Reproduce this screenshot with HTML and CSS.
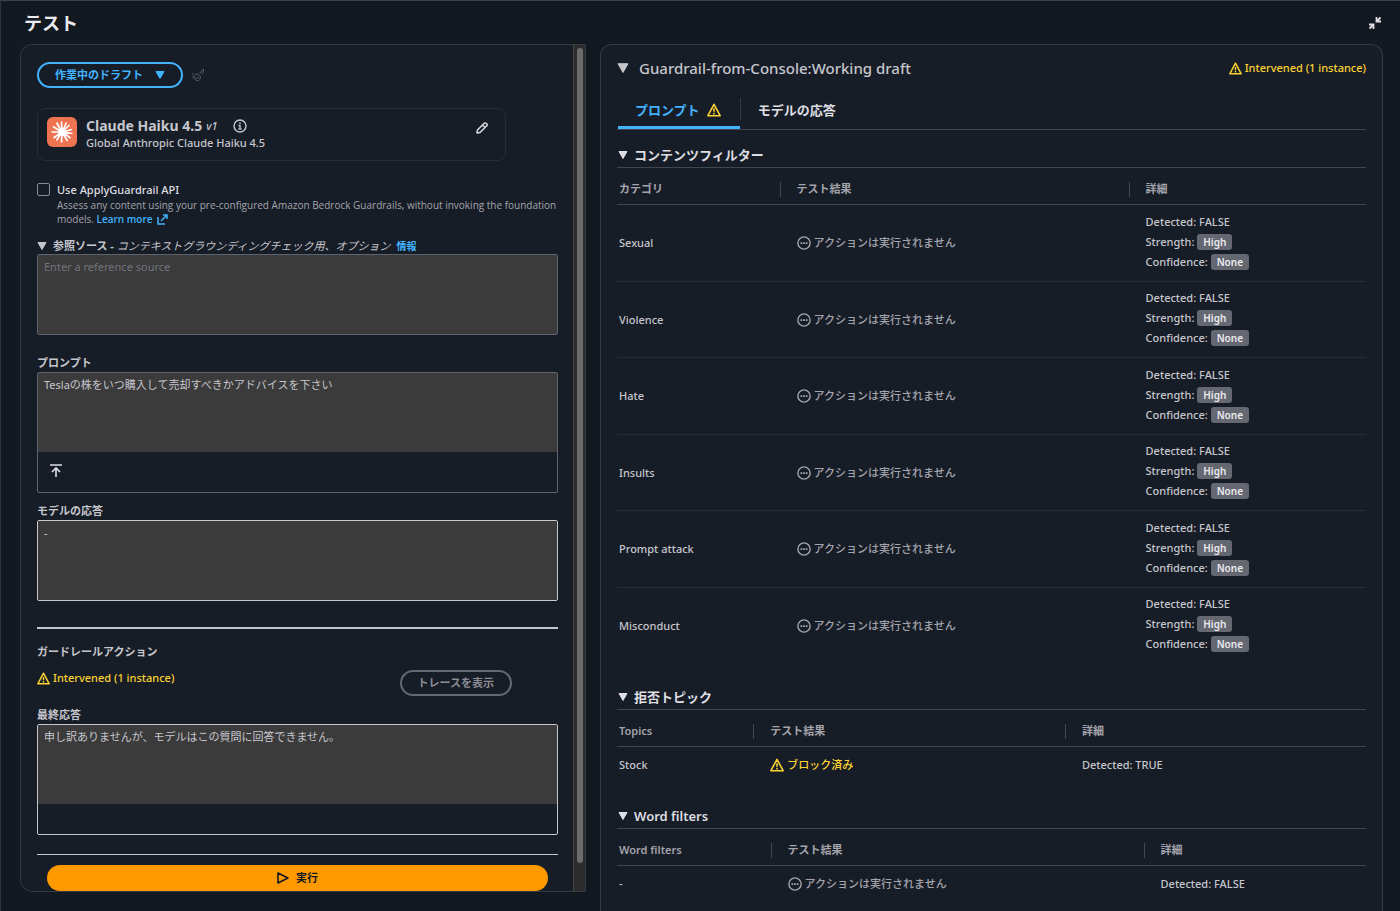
FILE: index.html
```html
<!DOCTYPE html>
<html lang="ja">
<head>
    <meta charset="UTF-8">
    <meta name="viewport" content="width=device-width, initial-scale=1.0">
    <title>テスト</title>
    <link rel="stylesheet" href="styles.css">
</head>
<body>
    <!-- shared icons -->
    <svg width="0" height="0" class="sprite">
        <symbol id="warn" viewBox="0 0 16 16">
            <path d="M8 1.5 15 14.5H1Z" fill="none" stroke="currentColor" stroke-width="1.8" stroke-linejoin="round"/>
            <path d="M8 6v4M8 11v2" stroke="currentColor" stroke-width="1.8"/>
        </symbol>
        <symbol id="dots" viewBox="0 0 16 16">
            <circle cx="8" cy="8" r="7" fill="none" stroke="currentColor" stroke-width="1.6"/>
            <path d="M4 8h2M7 8h2M10 8h2" stroke="currentColor" stroke-width="2"/>
        </symbol>
        <symbol id="caret" viewBox="0 0 10 10">
            <path d="M1 1.500h8L5 8.500Z" fill="currentColor" stroke="currentColor" stroke-linejoin="round"/>
        </symbol>
    </svg>

    <header class="top">
        <h1>テスト</h1>
        <button class="icon-button" aria-label="閉じる">
            <svg width="14" height="14" viewBox="0 0 14 14" fill="none" stroke="currentColor" stroke-width="1.800"><path d="M12.500 1.500 9 5M8.500 1v4.500H13M1.500 12.500 5 9M1 8.500h4.500V13"/></svg>
        </button>
    </header>

    <main class="columns">
        <section class="panel left">
            <div class="left-content">
                <div class="toolbar">
                    <button class="draft-button">作業中のドラフト <svg width="10" height="10"><use href="#caret"/></svg></button>
                    <button class="icon-button muted" aria-label="クリア">
                        <svg width="14" height="14" viewBox="0 0 14 14" fill="none" stroke="currentColor"><path d="M12.500 1 8.500 5.500M12.500 1v3L10 6.500M5.500 5l4 4M5.500 5C5 7.500 3.500 8.500 1.500 9L6 13C8.500 12.500 9.500 11 9.500 9M4.500 9.500 6 11M7 9v2M1 6h2"/></svg>
                    </button>
                </div>

                <div class="model">
                    <svg class="model-logo" width="30" height="30" viewBox="0 0 30 30">
                        <rect width="30" height="30" rx="6" fill="#ee7350"/>
                        <path d="M15 15 14.500 4.500M15 15l4.500-9.500M15 15l7.500-7M15 15l10-2.500M15 15l10.500 1.500M15 15l8.500 6M15 15l5.500 9M15 15l-.5 10.500M15 15l-5.500 8.500M15 15l-8.500 6M15 15H4.500M15 15 6 9.500M15 15 9.500 5.500" stroke="#fff" stroke-width="1.700"/>
                        <circle cx="15" cy="15" r="4" fill="#fff"/>
                    </svg>
                    <div class="model-text">
                        <div class="model-name"><strong>Claude Haiku 4.5</strong> <em>v1</em>
                            <svg width="14" height="14" viewBox="0 0 14 14" fill="none" stroke="currentColor" stroke-width="1.4"><circle cx="7" cy="7" r="6"/><path d="M7 3.500V5M5.500 6.500H7v3.500M5.500 10h3"/></svg>
                        </div>
                        <div class="model-sub">Global Anthropic Claude Haiku 4.5</div>
                    </div>
                    <button class="icon-button edit" aria-label="編集">
                        <svg width="12" height="12" viewBox="0 0 12 12" fill="none" stroke="currentColor" stroke-width="1.500" stroke-linejoin="round"><path d="M1 11 1.500 8 8 1.500Q9 .5 10.500 1.500T10.500 4L4 10.500ZM6.500 3 9 5.500"/></svg>
                    </button>
                </div>

                <div class="check">
                    <input type="checkbox" id="applyApi">
                    <div>
                        <label for="applyApi">Use ApplyGuardrail API</label>
                        <p>Assess any content using your pre-configured Amazon Bedrock Guardrails, without invoking the foundation models. <a href="#">Learn more <svg width="11" height="11" viewBox="0 0 11 11" fill="none" stroke="currentColor" stroke-width="1.500"><path d="M1 3v7h7M6 1h4v4M10 1 4 7"/></svg></a></p>
                    </div>
                </div>

                <div class="source-title">
                    <svg width="10" height="10"><use href="#caret"/></svg>
                    <label for="source">参照ソース - <em>コンテキストグラウンディングチェック用、オプション</em></label>
                    <a href="#">情報</a>
                </div>
                <div class="box source-box">
                    <textarea id="source" placeholder="Enter a reference source"></textarea>
                </div>

                <label class="field-label" for="prompt">プロンプト</label>
                <div class="box prompt-box">
                    <textarea id="prompt">Teslaの株をいつ購入して売却すべきかアドバイスを下さい</textarea>
                    <div class="box-footer prompt-footer">
                        <button class="icon-button" aria-label="アップロード">
                            <svg width="12" height="14" viewBox="0 0 12 14" fill="none" stroke="currentColor" stroke-width="1.600"><path d="M0 1h12M6 13V4M2 8l4-4 4 4"/></svg>
                        </button>
                    </div>
                </div>

                <label class="field-label" for="response">モデルの応答</label>
                <div class="box bright">
                    <textarea id="response" readonly>-</textarea>
                </div>

                <div class="action">
                    <div>
                        <h2>ガードレールアクション</h2>
                        <span class="warning"><svg width="13" height="13"><use href="#warn"/></svg>Intervened (1 instance)</span>
                    </div>
                    <button class="trace-button">トレースを表示</button>
                </div>

                <label class="field-label final-label" for="final">最終応答</label>
                <div class="box bright">
                    <textarea id="final" readonly>申し訳ありませんが、モデルはこの質問に回答できません。</textarea>
                    <div class="box-footer"></div>
                </div>

                <div class="run-row">
                    <button class="run-button"><svg width="12" height="12" viewBox="0 0 12 12" fill="none" stroke="currentColor" stroke-width="1.600" stroke-linejoin="round"><path d="M1 1v10l10-5Z"/></svg>実行</button>
                </div>
            </div>
            <div class="scrollbar"><div class="thumb"></div></div>
        </section>

        <section class="panel right">
            <div class="trace-head">
                <svg width="12" height="12"><use href="#caret"/></svg>
                <h2>Guardrail-from-Console:Working draft</h2>
                <span class="warning"><svg width="13" height="13"><use href="#warn"/></svg>Intervened (1 instance)</span>
            </div>

            <div class="tabs" role="tablist">
                <button class="tab active" role="tab">プロンプト <svg width="14" height="14"><use href="#warn"/></svg></button>
                <button class="tab" role="tab">モデルの応答</button>
            </div>

            <h3><svg width="10" height="10"><use href="#caret"/></svg>コンテンツフィルター</h3>
            <table class="filters">
                <thead>
                    <tr><th>カテゴリ</th><th>テスト結果</th><th>詳細</th></tr>
                </thead>
                <tbody>
                    <tr>
                        <td>Sexual</td>
                        <td><span class="no-action"><svg width="14" height="14"><use href="#dots"/></svg>アクションは実行されません</span></td>
                        <td><div>Detected: FALSE</div><div>Strength: <span class="badge">High</span></div><div>Confidence: <span class="badge">None</span></div></td>
                    </tr>
                    <tr>
                        <td>Violence</td>
                        <td><span class="no-action"><svg width="14" height="14"><use href="#dots"/></svg>アクションは実行されません</span></td>
                        <td><div>Detected: FALSE</div><div>Strength: <span class="badge">High</span></div><div>Confidence: <span class="badge">None</span></div></td>
                    </tr>
                    <tr>
                        <td>Hate</td>
                        <td><span class="no-action"><svg width="14" height="14"><use href="#dots"/></svg>アクションは実行されません</span></td>
                        <td><div>Detected: FALSE</div><div>Strength: <span class="badge">High</span></div><div>Confidence: <span class="badge">None</span></div></td>
                    </tr>
                    <tr>
                        <td>Insults</td>
                        <td><span class="no-action"><svg width="14" height="14"><use href="#dots"/></svg>アクションは実行されません</span></td>
                        <td><div>Detected: FALSE</div><div>Strength: <span class="badge">High</span></div><div>Confidence: <span class="badge">None</span></div></td>
                    </tr>
                    <tr>
                        <td>Prompt attack</td>
                        <td><span class="no-action"><svg width="14" height="14"><use href="#dots"/></svg>アクションは実行されません</span></td>
                        <td><div>Detected: FALSE</div><div>Strength: <span class="badge">High</span></div><div>Confidence: <span class="badge">None</span></div></td>
                    </tr>
                    <tr>
                        <td>Misconduct</td>
                        <td><span class="no-action"><svg width="14" height="14"><use href="#dots"/></svg>アクションは実行されません</span></td>
                        <td><div>Detected: FALSE</div><div>Strength: <span class="badge">High</span></div><div>Confidence: <span class="badge">None</span></div></td>
                    </tr>
                </tbody>
            </table>

            <h3><svg width="10" height="10"><use href="#caret"/></svg>拒否トピック</h3>
            <table class="topics">
                <thead>
                    <tr><th>Topics</th><th>テスト結果</th><th>詳細</th></tr>
                </thead>
                <tbody>
                    <tr>
                        <td>Stock</td>
                        <td><span class="warning"><svg width="14" height="14"><use href="#warn"/></svg>ブロック済み</span></td>
                        <td>Detected: TRUE</td>
                    </tr>
                </tbody>
            </table>

            <h3><svg width="10" height="10"><use href="#caret"/></svg>Word filters</h3>
            <table class="words">
                <thead>
                    <tr><th>Word filters</th><th>テスト結果</th><th>詳細</th></tr>
                </thead>
                <tbody>
                    <tr>
                        <td>-</td>
                        <td><span class="no-action"><svg width="14" height="14"><use href="#dots"/></svg>アクションは実行されません</span></td>
                        <td>Detected: FALSE</td>
                    </tr>
                </tbody>
            </table>
        </section>
    </main>
</body>
</html>
```
FILE: styles.css
```css
* {
    box-sizing: border-box;
}
body {
    margin: 0;
    height: 100vh;
    overflow: hidden;
    display: flex;
    flex-direction: column;
    background: #131920;
    border-top: 1px solid #3a424d;
    border-left: 1px solid #2c333d;
    color: #c6c6cd;
    font-family: "Noto Sans", "Noto Sans CJK JP", sans-serif;
    font-size: 11px;
    line-height: 16px;
}
h1, h2, h3, p {
    margin: 0;
}
button {
    font: inherit;
    cursor: pointer;
}
a {
    color: #42b4ff;
    font-weight: 600;
    text-decoration: none;
}
.sprite {
    position: absolute;
}
.icon-button {
    display: flex;
    padding: 0;
    border: 0;
    background: none;
    color: #dedee3;
}
.muted {
    color: #565a64;
}
.top {
    display: flex;
    align-items: center;
    justify-content: space-between;
    height: 43px;
    flex: none;
    padding: 0 18px 0 23px;
}
h1 {
    font-size: 18px;
    line-height: 24px;
    font-weight: 600;
    color: #ebebf0;
}
.columns {
    flex: 1;
    min-height: 0;
    display: grid;
    grid-template-columns: 566fr 783fr;
    gap: 14px;
    padding: 0 17px 0 19px;
}
.panel {
    min-width: 0;
    min-height: 0;
    background: #171d26;
    border: 1px solid #343b46;
    border-radius: 12px;
    overflow: hidden;
}

/* left panel */
.left {
    display: flex;
    margin-bottom: 19px;
    border-top-right-radius: 0;
    border-bottom-right-radius: 0;
}
.left-content {
    flex: 1;
    min-width: 0;
    padding: 17px 15px 0 16px;
}
.scrollbar {
    width: 12px;
    padding: 3px 2px 28px 3px;
    background: #2c2c2c;
    border-left: 1px solid #46433f;
}
.thumb {
    height: 100%;
    border-radius: 4px;
    background: #6b6b6b;
}
.toolbar {
    display: flex;
    align-items: center;
    gap: 8px;
    margin-bottom: 20px;
}
.draft-button, .trace-button {
    height: 26px;
    display: flex;
    align-items: center;
    border: 2px solid #42b4ff;
    border-radius: 13px;
    padding: 0 16px;
    background: none;
    color: #42b4ff;
    font-weight: 700;
    gap: 12px;
}
.model {
    display: flex;
    align-items: flex-start;
    width: 90%;
    height: 53px;
    padding: 8px 17px 0 9px;
    border: 1px solid #262d37;
    border-radius: 8px;
}
.model-text {
    flex: 1;
    margin-left: 9px;
    font-weight: 500;
}
.model-name {
    display: flex;
    align-items: center;
    gap: 4px;
    height: 18px;
}
.model-name strong {
    font-size: 14px;
}
.model-name svg {
    margin-left: 11px;
}
.edit {
    margin-top: 5px;
}
.check {
    display: flex;
    gap: 7px;
    margin: 21px -12px 0 0;
}
.check input {
    appearance: none;
    width: 13px;
    height: 13px;
    margin: 1px 0 0;
    border: 1px solid #8c8c94;
    border-radius: 2px;
    flex: none;
}
.check label {
    display: block;
    color: #dedee3;
    font-weight: 500;
}
.check p {
    font-family: "Open Sans", sans-serif;
    font-size: 10px;
    line-height: 14px;
    color: #a4a4ad;
}
.check a {
    display: inline-flex;
    align-items: center;
    gap: 4px;
}
.source-title {
    display: flex;
    align-items: center;
    gap: 6px;
    height: 16px;
    margin-top: 12px;
    font-weight: 700;
}
.source-title em {
    font-weight: 400;
}
.source-title a {
    font-size: 10px;
}
.box {
    border: 1px solid #5e636d;
    border-radius: 2px;
}
.bright {
    border-color: #c6c6cd;
}
textarea {
    display: block;
    width: 100%;
    height: 79px;
    padding: 4px 6px;
    border: 0;
    outline: 0;
    resize: none;
    background: #3b3b3b;
    color: #c6c6cd;
    font: inherit;
}
textarea::placeholder {
    color: #72747e;
}
.source-box {
    margin-bottom: 19px;
}
.field-label {
    display: block;
    height: 18px;
    line-height: 18px;
    font-weight: 700;
}
.box-footer {
    height: 30px;
}
.prompt-footer {
    height: 40px;
    padding: 12px;
}
.prompt-box {
    margin-bottom: 9px;
}
.action {
    display: flex;
    align-items: flex-start;
    justify-content: space-between;
    height: 71px;
    margin-top: 26px;
    padding-right: 46px;
    border-top: 2px solid #c6c6cd;
}
.action h2 {
    font-size: 11px;
    line-height: 16px;
    margin: 15px 0 10px;
}
.trace-button {
    margin-top: 41px;
    border-color: #656871;
    color: #8c8c94;
}
.final-label {
    margin-top: 8px;
}
.run-row {
    margin-top: 19px;
    padding: 10px 10px 0;
    border-top: 1px solid #c6c6cd;
}
.run-button {
    display: flex;
    align-items: center;
    justify-content: center;
    gap: 7px;
    width: 100%;
    height: 26px;
    border: 0;
    border-radius: 13px;
    background: #ff9900;
    color: #131920;
    font-weight: 700;
}
.warning, .no-action {
    display: flex;
    align-items: center;
    gap: 3px;
}
.warning {
    color: #fbd332;
    font-weight: 500;
}
.no-action {
    color: #a4a4ad;
}

/* right panel */
.right {
    padding: 13px 16px 0;
    border-bottom: 0;
    border-bottom-left-radius: 0;
    border-bottom-right-radius: 0;
}
.trace-head {
    display: flex;
    align-items: center;
    height: 20px;
}
.trace-head h2 {
    flex: 1;
    margin-left: 10px;
    font-size: 15px;
    font-weight: 500;
}
.tabs {
    display: flex;
    height: 52px;
    padding: 20px 0 0 1px;
    border-bottom: 1px solid #424650;
}
.tab {
    position: relative;
    display: flex;
    align-items: center;
    gap: 7px;
    padding: 0 19px 7px 18px;
    border: 0;
    background: none;
    color: #dedee3;
    font-size: 13px;
    font-weight: 600;
}
.tab svg {
    color: #fbd332;
}
.tab.active {
    color: #42b4ff;
    border-bottom: 3px solid #42b4ff;
    padding-left: 17px;
    padding-bottom: 4px;
}
.tab.active::after {
    content: "";
    position: absolute;
    right: -1px;
    top: 0;
    height: 22px;
    border-right: 1px solid #343b46;
}
h3 {
    display: flex;
    align-items: center;
    gap: 6px;
    height: 26px;
    margin-top: 19px;
    padding: 2px 0 0 1px;
    font-size: 13px;
    font-weight: 600;
    color: #dedee3;
}
.tabs + h3 {
    margin-top: 11px;
}
table {
    width: 100%;
    table-layout: fixed;
    border-collapse: separate;
    border-spacing: 0;
    border-top: 1px solid #424650;
}
th, td {
    position: relative;
    height: 36px;
    padding: 0 0 0 17px;
    text-align: left;
}
th:first-child, td:first-child {
    padding-left: 2px;
}
th {
    height: 37px;
    padding-top: 5px;
    border-bottom: 1px solid #424650;
    color: #a4a4ad;
    font-weight: 600;
}
th + th::before {
    content: "";
    position: absolute;
    left: 0;
    top: 14px;
    height: 15px;
    border-left: 1px solid #424650;
}
td {
    font-weight: 500;
}
.filters th:nth-child(1) { width: 21.7%; }
.filters th:nth-child(2) { width: 46.6%; }
.topics th:nth-child(1) { width: 18.2%; }
.topics th:nth-child(2) { width: 41.6%; }
.words th:nth-child(1) { width: 20.5%; }
.words th:nth-child(2) { width: 49.8%; }
.filters td {
    height: 77px;
    border-bottom: 1px solid #262d37;
}
.filters tr:nth-child(even) td {
    height: 76px;
}
.filters td:last-child {
    padding-bottom: 3px;
}
.filters tr:last-child td {
    border-bottom-color: transparent;
}
.filters td div {
    height: 20px;
    line-height: 20px;
}
.badge {
    display: inline-block;
    height: 16px;
    padding: 0 6px;
    border-radius: 3px;
    background: #656871;
    color: #ebebf0;
    font-size: 10px;
    line-height: 16px;
    font-weight: 600;
}
```
